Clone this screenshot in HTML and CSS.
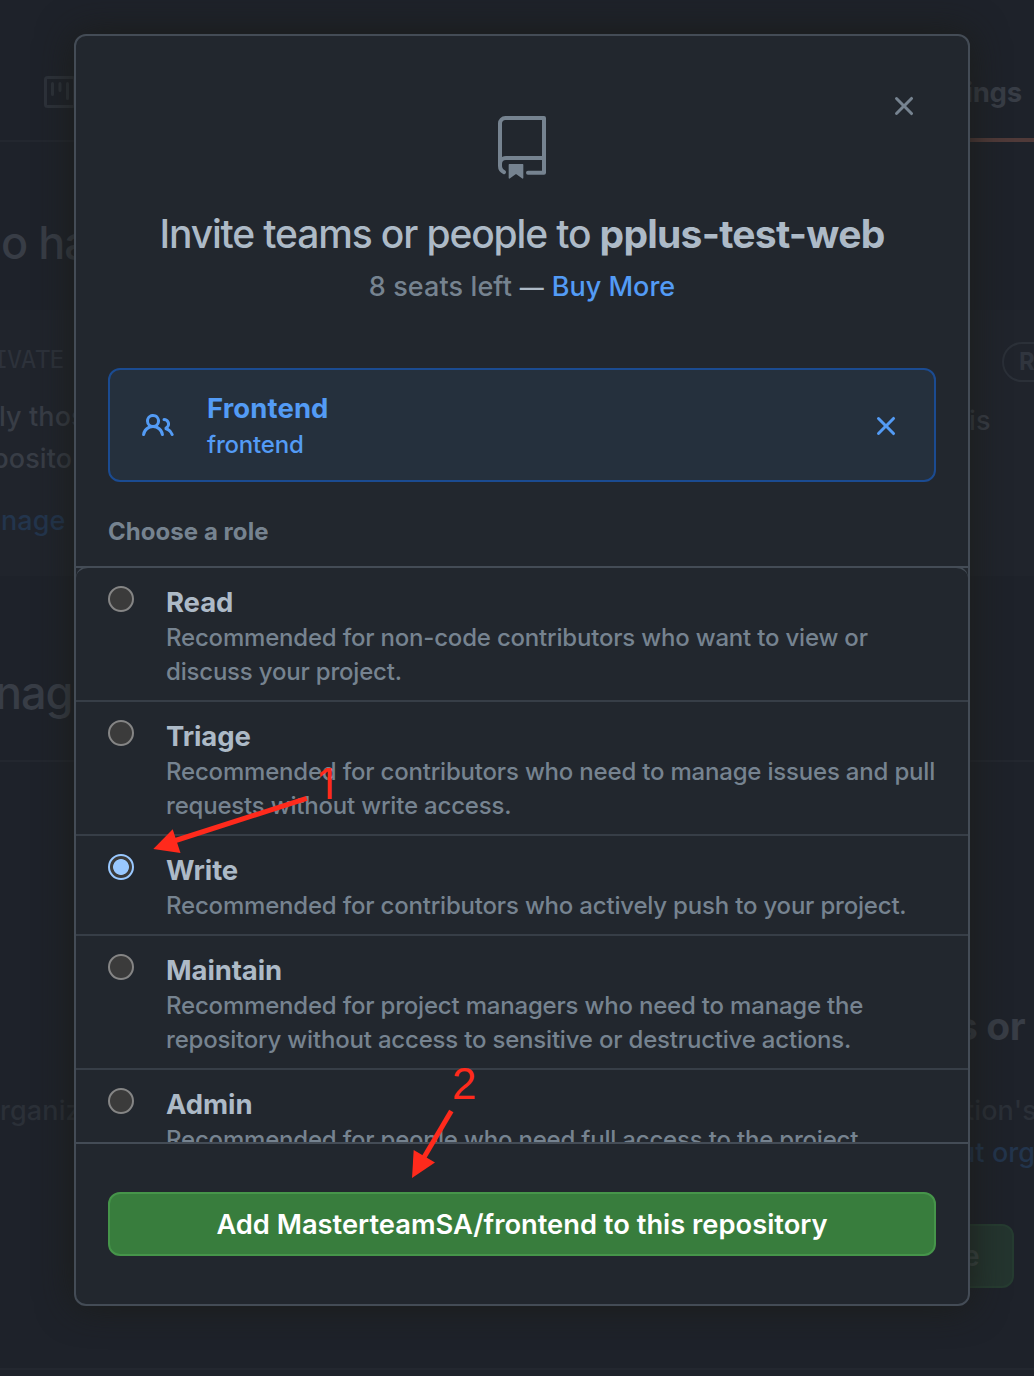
FILE: index.html
```html
<!DOCTYPE html>
<html lang="en">
<head>
<meta charset="utf-8">
<title>Invite teams or people</title>
<link rel="stylesheet" href="styles.css">
</head>
<body>
<main class="page" aria-hidden="true">
  <nav class="page-nav">
    <svg class="project-icon" viewBox="0 0 32 32"><rect x="1.5" y="1.5" width="29" height="29" rx="2"/><path d="M8.5 7.500v11M16 7.500v7M23.500 7.500v15"/></svg>
    <span class="tab">Settings</span>
  </nav>
  <section class="access"><h2>o has</h2></section>
  <section class="visibility">
    <div class="vis-left">
      <span class="mono">IVATE</span>
      <span class="copy only">ly those</span>
      <span class="copy repo-line">pository.</span>
      <span class="copy link manage">nage</span>
    </div>
    <div class="vis-right">
      <span class="pill">Role</span>
      <span class="copy">is</span>
    </div>
  </section>
  <section class="manage-head"><h2>nage</h2></section>
  <section class="empty">
    <div class="empty-left copy">rganiz</div>
    <div class="empty-right">
      <h3>s or</h3>
      <span class="copy faint">tion's</span>
      <span class="copy link">ut orga</span>
      <span class="back-btn">e</span>
    </div>
  </section>
</main>

<div class="dialog" role="dialog">
  <header class="head">
    <button class="close" aria-label="Close"><svg viewBox="0 0 16 16"><path d="M3.72 3.72a.75.75 0 011.06 0L8 6.94l3.22-3.22a.75.75 0 111.06 1.06L9.06 8l3.22 3.22a.75.75 0 11-1.06 1.06L8 9.06l-3.22 3.22a.75.75 0 01-1.06-1.06L6.94 8 3.72 4.78a.75.75 0 010-1.06z"/></svg></button>
    <svg class="repo" viewBox="0 0 24 24"><path fill-rule="evenodd" d="M3 2.75A2.75 2.75 0 015.75 0h14.5a.75.75 0 01.75.75v20.5a.75.75 0 01-.75.75h-6a.75.75 0 010-1.5h5.25v-4H6A1.5 1.5 0 004.5 18v.75c0 .716.43 1.334 1.05 1.605a.75.75 0 01-.6 1.374A3.25 3.25 0 013 18.75v-16zM19.5 1.5V15H6c-.546 0-1.059.146-1.5.401V2.75c0-.69.56-1.25 1.25-1.25H19.5z"/><path d="M7 18.25a.25.25 0 01.25-.25h5a.25.25 0 01.25.25v5.01a.25.25 0 01-.397.201l-2.206-1.604a.25.25 0 00-.294 0L7.397 23.46a.25.25 0 01-.397-.2v-5.01z"/></svg>
    <h1><span class="t1">Invite teams or people to </span><b>pplus-test-web</b></h1>
    <p class="seats"><span>8 seats left</span> <i>—</i> <a>Buy More</a></p>
    <div class="team">
      <svg class="people" viewBox="0 0 16 16"><path fill-rule="evenodd" d="M5.5 3.5a2 2 0 100 4 2 2 0 000-4zM2 5.5a3.5 3.5 0 115.898 2.549 5.507 5.507 0 013.034 4.084.75.75 0 11-1.482.235 4.001 4.001 0 00-7.9 0 .75.75 0 01-1.482-.236A5.507 5.507 0 013.102 8.05 3.49 3.49 0 012 5.5zM11 4a.75.75 0 100 1.5 1.5 1.5 0 01.666 2.844.75.75 0 00-.416.672v.352a.75.75 0 00.574.73c1.2.289 2.162 1.2 2.522 2.372a.75.75 0 101.434-.44 5.01 5.01 0 00-2.56-3.012A3 3 0 0011 4z"/></svg>
      <div class="team-name"><strong>Frontend</strong><span>frontend</span></div>
      <svg class="remove" viewBox="0 0 16 16"><path d="M3.72 3.72a.75.75 0 011.06 0L8 6.94l3.22-3.22a.75.75 0 111.06 1.06L9.06 8l3.22 3.22a.75.75 0 11-1.06 1.06L8 9.06l-3.22 3.22a.75.75 0 01-1.06-1.06L6.94 8 3.72 4.78a.75.75 0 010-1.06z"/></svg>
    </div>
    <div class="choose"><span>Choose a role</span></div>
  </header>
  <div class="roles-wrap">
    <ul class="roles">
      <li><i class="radio"></i><div><strong>Read</strong><p>Recommended for non-code contributors who want to view or<br>discuss your project.</p></div></li>
      <li><i class="radio"></i><div><strong>Triage</strong><p>Recommended for contributors who need to manage issues and pull<br>requests without write access.</p></div></li>
      <li><i class="radio checked"></i><div><strong>Write</strong><p>Recommended for contributors who actively push to your project.</p></div></li>
      <li><i class="radio"></i><div><strong>Maintain</strong><p>Recommended for project managers who need to manage the<br>repository without access to sensitive or destructive actions.</p></div></li>
      <li><i class="radio"></i><div><strong>Admin</strong><p>Recommended for people who need full access to the project</p></div></li>
    </ul>
  </div>
  <footer class="foot"><button class="submit"><span>Add MasterteamSA/frontend to this repository</span></button></footer>
</div>

<svg class="notes" viewBox="0 0 1034 1376">
  <path d="M306.700 798.300L174 841" /><path class="tip" d="M153.300 849L172.700 829.300L180.500 853z"/>
  <path d="M451.300 1111L423 1159"/><path class="tip" d="M412 1178L413.700 1150L435 1162.500z"/>
  <text class="one" x="318" y="799">1</text>
  <text x="452" y="1099">2</text>
</svg>
</body>
</html>
```
FILE: styles.css
```css
* { box-sizing: border-box; }
html { overflow: hidden; }
body {
  margin: 0;
  width: 1034px;
  height: 1376px;
  position: relative;
  overflow: hidden;
  background: #1e222a;
  font-family: Inter, "Liberation Sans", sans-serif;
}
h1, h2, h3, p, ul { margin: 0; padding: 0; font-weight: 400; }
span, strong, a, h1, h2, h3, p { white-space: nowrap; }

/* Dimmed page behind the dialog */
.page { height: 1376px; display: flex; flex-direction: column; color: #383d46; overflow: hidden; }
.page-nav { height: 142px; flex: none; border-bottom: 2px solid #23272f; display: flex; justify-content: space-between; padding-left: 44px; }
.project-icon { width: 32px; height: 32px; margin-top: 76px; fill: none; stroke: #2d323a; stroke-width: 3; stroke-linecap: round; }
.tab { height: 142px; padding: 75px 12px 0 0; border-bottom: 4px solid #503a39; font-size: 27.5px; font-weight: 650; line-height: 34px; letter-spacing: -.2px; }
.access { height: 168px; padding-top: 73px; }
.page h2 { font-size: 45px; font-weight: 450; line-height: 56px; letter-spacing: -1px; margin-left: 1px; }
.visibility { height: 266px; background: #20242c; display: flex; justify-content: space-between; }
.vis-left, .vis-right { display: flex; flex-direction: column; }
.vis-left { padding-top: 33px; }
.mono { font: 25px/34px "DejaVu Sans Mono", monospace; letter-spacing: -1px; margin-left: -7px; color: #2d323b; }
.copy { font-size: 27px; font-weight: 450; line-height: 42px; letter-spacing: .1px; }
.only { margin-top: 19px; margin-left: -1px; }
.repo-line { margin-left: -8px; }
.manage { margin-top: 20px; margin-left: 1px; }
.page .link { color: #23354d; }
.vis-right { width: 64px; padding-top: 32px; }
.pill { height: 40px; width: 90px; margin-left: 32px; border: 2px solid #2b3038; border-radius: 20px; padding-left: 15px; font-size: 24px; font-weight: 650; line-height: 36px; color: #30353e; }
.vis-right .copy { margin-top: 18px; margin-left: -1px; }
.manage-head { height: 186px; border-bottom: 2px solid #23272f; padding-top: 89px; }
.manage-head h2 { margin-left: -5px; }
.empty { height: 608px; border-bottom: 2px solid #23272f; display: flex; justify-content: space-between; }
.empty-left { padding-top: 328px; color: #2b3038; }
.empty-right { width: 70px; display: flex; flex-direction: column; padding-top: 239px; }
.empty h3 { font-size: 39px; font-weight: 650; line-height: 50px; margin-left: -8px; letter-spacing: -.4px; }
.empty-right .copy { margin-left: 1px; }
.empty-right .link { margin-left: -5px; }
.faint { color: #2b3038; margin-top: 39px; }
.back-btn { width: 90px; height: 64px; margin: 50px 0 0 -40px; padding-left: 37px; border: 2px solid #263c31; border-radius: 12px; background: #24352f; color: #3b4745; font-size: 28px; font-weight: 600; line-height: 60px; }

/* Dialog */
.dialog {
  position: absolute; left: 74px; top: 34px; width: 896px; height: 1272px;
  border: 2px solid #444c56; border-radius: 12px; background: #22272e;
  box-shadow: 0 0 36px rgba(27, 28, 24, .95);
  color: #adbac7; display: flex; flex-direction: column; overflow: hidden;
}
.head { height: 532px; flex: none; border-bottom: 2px solid #444c56; display: flex; flex-direction: column; align-items: center; padding: 0 32px; }
.close { align-self: flex-end; width: 32px; height: 32px; margin: 54px 16px 0; padding: 0; border: 0; background: none; }
.close svg { display: block; width: 32px; height: 32px; fill: #768390; }
.repo { width: 64px; height: 64px; margin-top: -6px; fill: #768390; flex: none; }
h1 { margin-top: 29px; font-size: 39px; line-height: 50px; white-space: pre; }
h1 .t1 { font-weight: 450; letter-spacing: -1.15px; white-space: pre; }
h1 b { font-weight: 650; letter-spacing: -.75px; }
.seats { height: 36px; margin-top: 10px; font-size: 27px; line-height: 36px; letter-spacing: .1px; font-weight: 450; }
.seats span { color: #768390; }
.seats i { font-style: normal; font-size: 24px; margin: 0 .5px; }
.seats a { color: #539bf5; letter-spacing: 0; }
.team { width: 828px; height: 114px; flex: none; margin-top: 63px; border: 2px solid #1b4b91; border-radius: 12px; background: #25303d; color: #539bf5; fill: #539bf5; display: flex; align-items: center; padding: 2px 32px 0; }
.people { width: 32px; height: 32px; }
.team-name { flex: 1; margin: 0 0 0 33px; display: flex; flex-direction: column; }
.team-name strong { font-size: 27.5px; font-weight: 650; line-height: 38px; letter-spacing: .1px; }
.team-name span { font-size: 24px; line-height: 36px; font-weight: 450; letter-spacing: -.2px; }
.remove { width: 32px; height: 32px; }
.choose { align-self: flex-start; margin-top: 32px; color: #768390; font-size: 24px; font-weight: 650; line-height: 36px; letter-spacing: .05px; }
.roles-wrap { height: 574px; flex: none; overflow: hidden; background: #22272e; }
.roles { list-style: none; border-top: 2px solid #444c56; margin-top: -2px; border-radius: 12px 12px 0 0; }
.roles li { display: flex; padding: 16px 32px 12px; border-bottom: 2px solid #373e47; }
.radio { flex: none; width: 26px; height: 26px; margin: 2px 32px 0 0; border: 2px solid #858585; border-radius: 50%; background: #3b3b3b; }
.radio.checked { border-color: #99c8ff; background: radial-gradient(circle, #99c8ff 7.5px, #3b3b3b 8.3px); }
.roles strong { display: block; padding-bottom: 1px; font-size: 27.5px; font-weight: 650; line-height: 36px; letter-spacing: -.1px; }
.roles p { margin-bottom: -1px; font-size: 24px; font-weight: 450; line-height: 34px; letter-spacing: -.195px; color: #768390; }
.foot { flex: 1; border-top: 2px solid #444c56; padding: 48px 32px; }
.submit { display: block; width: 828px; height: 64px; padding: 2px 0 0; border: 2px solid #46954a; border-radius: 12px; background: #387d3d; color: #fff; font: 600 27.3px/58px Inter, "Liberation Sans", sans-serif; }

/* Hand-drawn annotation layer */
.notes { position: absolute; left: 0; top: 0; width: 1034px; height: 1376px; fill: none; stroke: #ff2a1c; stroke-width: 5; }
.notes .tip { fill: #ff2a1c; stroke: none; }
.notes text { fill: #ff2a1c; stroke: none; font: 44px "Liberation Sans", Arial, sans-serif; }
.notes .one { font: 42px Inter, sans-serif; }
```
